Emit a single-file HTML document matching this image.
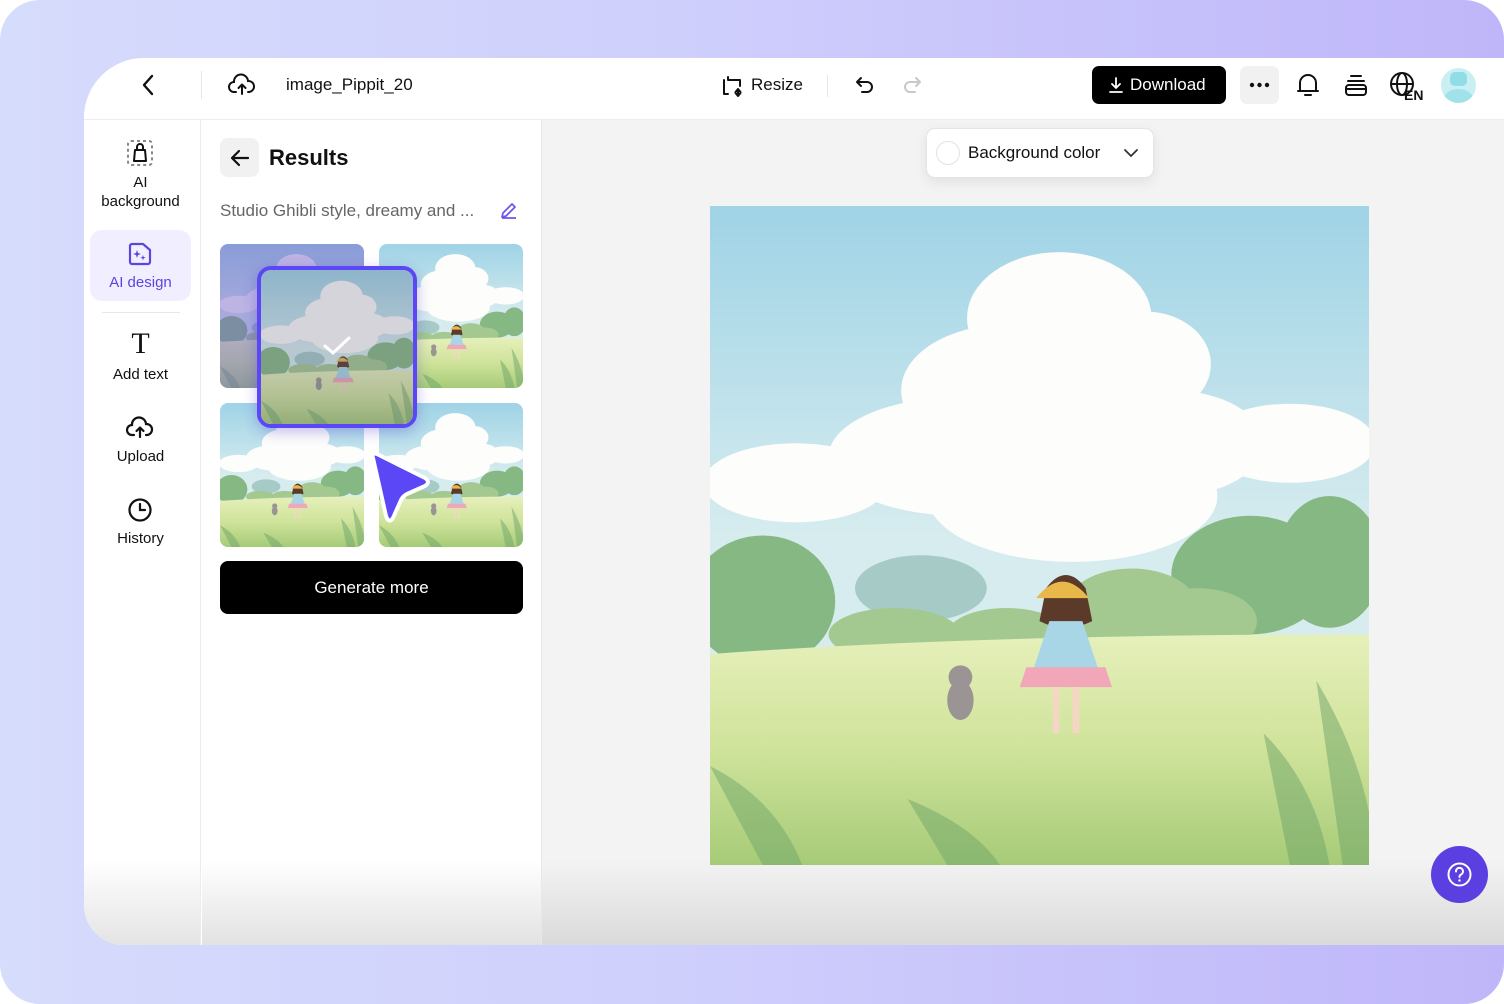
<!DOCTYPE html>
<html><head><meta charset="utf-8">
<style>
*{box-sizing:border-box;margin:0;padding:0}
body{width:1504px;height:1004px;overflow:hidden;background:#fff;font-family:"Liberation Sans",sans-serif;color:#111;position:relative}
.outer{position:absolute;left:0;top:0;width:1504px;height:1004px;border-radius:40px;background:linear-gradient(90deg,#d6dcfc 0%,#cfcffc 45%,#bfb6f9 100%)}
.win{position:absolute;left:84px;top:58px;width:1420px;height:887px;background:#fff;border-radius:60px 0 0 40px;overflow:hidden}
.top{position:absolute;left:0;top:0;width:1420px;height:62px;border-bottom:1px solid #ececec;background:#fff}
.side{position:absolute;left:0;top:62px;width:117px;height:825px;border-right:1px solid #ececec;background:linear-gradient(#fff 0,#fff 740px,#e4e4e4 825px)}
.panel{position:absolute;left:118px;top:62px;width:340px;height:825px;background:linear-gradient(#fff 0,#fff 740px,#e2e2e2 825px);border-right:1px solid #e8e8e8}
.canvas{position:absolute;left:458px;top:62px;width:962px;height:825px;background:linear-gradient(#f3f3f3 0,#f3f3f3 740px,#dadada 825px)}
.ab{position:absolute;font-size:15px;text-align:center;width:113px;left:0;line-height:19px}
svg{display:block}
.thumb{position:absolute;width:144px;height:144px;border-radius:8px;overflow:hidden}
</style></head><body>
<svg width="0" height="0" style="position:absolute">
<defs>
<linearGradient id="sky" x1="0" y1="0" x2="0" y2="1"><stop offset="0" stop-color="#9fd3e6"/><stop offset="0.5" stop-color="#d6ecef"/></linearGradient>
<linearGradient id="mead" x1="0" y1="0" x2="0" y2="1"><stop offset="0" stop-color="#e6f0bb"/><stop offset="0.5" stop-color="#cfe39a"/><stop offset="1" stop-color="#a6cb78"/></linearGradient>
<symbol id="scene" viewBox="0 0 100 100" preserveAspectRatio="none">
<rect width="100" height="100" fill="url(#sky)"/>
<g fill="#fdfdfb">
<ellipse cx="53" cy="17" rx="14" ry="10"/><ellipse cx="45" cy="28" rx="16" ry="10"/><ellipse cx="66" cy="24" rx="10" ry="8"/>
<ellipse cx="38" cy="38" rx="20" ry="9"/><ellipse cx="70" cy="36" rx="14" ry="8"/><ellipse cx="88" cy="36" rx="13" ry="6"/>
<ellipse cx="13" cy="42" rx="14" ry="6"/><ellipse cx="55" cy="44" rx="22" ry="10"/>
</g>
<ellipse cx="32" cy="58" rx="10" ry="5" fill="#a6cac6"/>
<g fill="#86b884"><ellipse cx="8" cy="60" rx="11" ry="10"/><ellipse cx="82" cy="56" rx="12" ry="9"/><ellipse cx="94" cy="54" rx="8" ry="10"/></g>
<g fill="#a3c990"><ellipse cx="28" cy="65" rx="10" ry="4"/><ellipse cx="64" cy="61" rx="10" ry="6"/><ellipse cx="45" cy="65" rx="9" ry="4"/><ellipse cx="74" cy="63" rx="9" ry="5"/></g>
<path d="M0 68 Q40 65 100 65 L100 100 L0 100Z" fill="url(#mead)"/>
<g fill="#6fa56a" opacity="0.5"><path d="M0 85 Q10 90 14 100 L8 100Z"/><path d="M84 80 Q92 88 94 100 L88 100Z"/><path d="M92 72 Q98 82 100 92 L100 100 L96 100Z"/><path d="M30 90 Q40 94 44 100 L36 100Z"/></g>
<path d="M51 58 q3 -4 6 0 l1 5 q-4 2 -8 0Z" fill="#5b3a2a"/>
<path d="M49.5 59.5 q4 -5 8 0Z" fill="#e8b84a"/>
<path d="M51.5 63 h5 l3 9 h-11Z" fill="#a9d6e6"/>
<path d="M48 70 h12 l1 3 h-14Z" fill="#f2a7b8"/>
<rect x="52" y="73" width="1" height="7" fill="#f5d6c4"/><rect x="55" y="73" width="1" height="7" fill="#f5d6c4"/>
<ellipse cx="38" cy="75" rx="2" ry="3" fill="#9a9494"/><circle cx="38" cy="71.5" r="1.8" fill="#9a9494"/>
</symbol>
</defs></svg>
<div class="outer"></div>
<div class="win">
 <div class="top">
  <svg style="position:absolute;left:56px;top:15px" width="16" height="24" viewBox="0 0 16 24"><path d="M12 3 L4 12 L12 21" fill="none" stroke="#111" stroke-width="2.4" stroke-linecap="round" stroke-linejoin="round"/></svg>
  <div style="position:absolute;left:117px;top:13px;width:1px;height:28px;background:#e6e6e6"></div>
  <svg style="position:absolute;left:144px;top:14px" width="28" height="26" viewBox="0 0 28 26"><path d="M8 20 H6 a5 5 0 0 1 0-10 a7 7 0 0 1 14-1 a5.5 5.5 0 0 1 1 11 h-1" fill="none" stroke="#111" stroke-width="2" stroke-linecap="round"/><path d="M14 22 V13 M10.5 16 L14 12.5 L17.5 16" fill="none" stroke="#111" stroke-width="2" stroke-linecap="round" stroke-linejoin="round"/></svg>
  <div style="position:absolute;left:202px;top:17px;font-size:17px;width:128px;overflow:hidden;white-space:nowrap">image_Pippit_20</div>
  <svg style="position:absolute;left:636px;top:16px" width="24" height="24" viewBox="0 0 24 24"><path d="M4 6 V20 H8 M8 3 V6 H20 V12 M18 15 V22 M15.5 18 L18 15 L20.5 18 M15.5 19 L18 22 L20.5 19" fill="none" stroke="#111" stroke-width="2" stroke-linecap="round" stroke-linejoin="round"/></svg>
  <div style="position:absolute;left:667px;top:17px;font-size:17px">Resize</div>
  <div style="position:absolute;left:743px;top:17px;width:1px;height:22px;background:#e6e6e6"></div>
  <svg style="position:absolute;left:769px;top:16px" width="24" height="24" viewBox="0 0 24 24"><path d="M8 4 L4 8 L8 12 M4 8 H14 a5 5 0 0 1 0 10 H9" fill="none" stroke="#111" stroke-width="2" stroke-linecap="round" stroke-linejoin="round"/></svg>
  <svg style="position:absolute;left:816px;top:16px" width="24" height="24" viewBox="0 0 24 24"><path d="M16 4 L20 8 L16 12 M20 8 H10 a5 5 0 0 0 0 10 H15" fill="none" stroke="#c8c8c8" stroke-width="2" stroke-linecap="round" stroke-linejoin="round"/></svg>
  <div style="position:absolute;left:1008px;top:8px;width:134px;height:38px;background:#000;border-radius:7px;color:#fff;font-size:17px;line-height:38px;padding-left:38px">Download</div>
  <svg style="position:absolute;left:1023px;top:18px" width="18" height="18" viewBox="0 0 18 18"><path d="M9 2 V12 M5 8 L9 12 L13 8 M3 16 H15" fill="none" stroke="#fff" stroke-width="1.8" stroke-linecap="round" stroke-linejoin="round"/></svg>
  <div style="position:absolute;left:1156px;top:8px;width:39px;height:38px;background:#f1f1f1;border-radius:7px"><svg width="39" height="38" viewBox="0 0 39 38"><circle cx="12" cy="19" r="2.2" fill="#111"/><circle cx="19.5" cy="19" r="2.2" fill="#111"/><circle cx="27" cy="19" r="2.2" fill="#111"/></svg></div>
  <svg style="position:absolute;left:1211px;top:13px" width="26" height="28" viewBox="0 0 26 28"><path d="M5 20 V12 a8 8 0 0 1 16 0 V20 H3 H23" fill="none" stroke="#111" stroke-width="2" stroke-linecap="round" stroke-linejoin="round"/><path d="M10 24 H16" stroke="#111" stroke-width="2" stroke-linecap="round"/></svg>
  <svg style="position:absolute;left:1259px;top:15px" width="26" height="26" viewBox="0 0 26 26"><path d="M8 3 H18 M5 8 H21" stroke="#111" stroke-width="2" stroke-linecap="round"/><rect x="3" y="12" width="20" height="10" rx="3" fill="none" stroke="#111" stroke-width="2"/><path d="M3 16 H23" stroke="#111" stroke-width="2"/></svg>
  <svg style="position:absolute;left:1305px;top:12px" width="40" height="32" viewBox="0 0 40 32"><circle cx="13" cy="14" r="11" fill="none" stroke="#111" stroke-width="2"/><ellipse cx="13" cy="14" rx="5" ry="11" fill="none" stroke="#111" stroke-width="2"/><path d="M2 14 H24" stroke="#111" stroke-width="2"/><text x="15" y="30" font-family="Liberation Sans" font-weight="bold" font-size="14" fill="#111">EN</text></svg>
  <div style="position:absolute;left:1357px;top:10px;width:35px;height:35px;border-radius:50%;background:#c9eff3;overflow:hidden"><div style="position:absolute;left:9px;top:4px;width:17px;height:14px;border-radius:5px;background:#90dde6"></div><div style="position:absolute;left:3px;top:21px;width:29px;height:20px;border-radius:50%;background:#9fe2ea"></div></div>
 </div>
 <div class="side">
  <svg style="position:absolute;left:42px;top:19px" width="28" height="28" viewBox="0 0 28 28"><rect x="2" y="2" width="24" height="24" rx="3" fill="none" stroke="#888" stroke-width="2" stroke-dasharray="3 3"/><path d="M8 22 L9 11 H19 L20 22Z M11 11 V8 a3 3 0 0 1 6 0 V11" fill="none" stroke="#111" stroke-width="2" stroke-linejoin="round"/></svg>
  <div class="ab" style="top:53px">AI<br>background</div>
  <div style="position:absolute;left:6px;top:110px;width:101px;height:71px;border-radius:12px;background:#f1efff"></div>
  <svg style="position:absolute;left:43px;top:122px" width="26" height="24" viewBox="0 0 26 24"><path d="M3 4 a2 2 0 0 1 2-2 H16 L23 8 V20 a2 2 0 0 1 -2 2 H5 a2 2 0 0 1 -2-2Z" fill="none" stroke="#5a45e0" stroke-width="2.2" stroke-linejoin="round"/><path d="M10 8 l1 3 l3 1 l-3 1 l-1 3 l-1-3 l-3-1 l3-1Z M16 13 l.7 2 l2 .7 l-2 .7 l-.7 2 l-.7-2 l-2-.7 l2-.7Z" fill="#5a45e0"/></svg>
  <div class="ab" style="top:153px;color:#5a45e0">AI design</div>
  <div style="position:absolute;left:18px;top:192px;width:78px;height:1px;background:#e8e8e8"></div>
  <div style="position:absolute;left:0;width:113px;top:209px;text-align:center;font-family:'Liberation Serif',serif;font-size:30px;line-height:30px">T</div>
  <div class="ab" style="top:245px">Add text</div>
  <svg style="position:absolute;left:42px;top:295px" width="28" height="26" viewBox="0 0 28 26"><path d="M8 20 H6 a5 5 0 0 1 0-10 a7 7 0 0 1 14-1 a5.5 5.5 0 0 1 1 11 h-1" fill="none" stroke="#111" stroke-width="2.2" stroke-linecap="round"/><path d="M14 22 V13 M10.5 16 L14 12.5 L17.5 16" fill="none" stroke="#111" stroke-width="2.2" stroke-linecap="round" stroke-linejoin="round"/></svg>
  <div class="ab" style="top:327px">Upload</div>
  <svg style="position:absolute;left:43px;top:377px" width="26" height="26" viewBox="0 0 26 26"><circle cx="13" cy="13" r="10.5" fill="none" stroke="#111" stroke-width="2.2"/><path d="M13 7 V13 H18" fill="none" stroke="#111" stroke-width="2.2" stroke-linecap="round"/></svg>
  <div class="ab" style="top:409px">History</div>
 </div>
 <div class="panel">
  <div style="position:absolute;left:18px;top:18px;width:39px;height:39px;background:#f1f1f1;border-radius:8px"></div>
  <svg style="position:absolute;left:27px;top:27px" width="22" height="22" viewBox="0 0 22 22"><path d="M19 11 H3 M10 4 L3 11 L10 18" fill="none" stroke="#111" stroke-width="2.2" stroke-linecap="round" stroke-linejoin="round"/></svg>
  <div style="position:absolute;left:67px;top:25px;font-size:22px;font-weight:bold">Results</div>
  <div style="position:absolute;left:18px;top:81px;font-size:17px;color:#666">Studio Ghibli style, dreamy and ...</div>
  <svg style="position:absolute;left:297px;top:80px" width="20" height="20" viewBox="0 0 20 20"><path d="M3 17 L4 13 L13 4 L16 7 L7 16Z M3 18 H17" fill="none" stroke="#6a55ee" stroke-width="1.7" stroke-linejoin="round"/></svg>
  <div class="thumb" style="left:18px;top:124px"><svg width="144" height="144"><use href="#scene"/></svg><div style="position:absolute;inset:0;background:rgba(110,90,200,.45)"></div></div>
  <div class="thumb" style="left:177px;top:124px"><svg width="144" height="144"><use href="#scene"/></svg></div>
  <div class="thumb" style="left:18px;top:283px"><svg width="144" height="144"><use href="#scene"/></svg></div>
  <div class="thumb" style="left:177px;top:283px"><svg width="144" height="144"><use href="#scene"/></svg></div>
  <div style="position:absolute;left:55px;top:146px;width:160px;height:162px;border:4px solid #5b47f5;border-radius:14px;overflow:hidden;box-shadow:0 4px 14px rgba(60,40,200,.3)"><svg width="152" height="154"><use href="#scene"/></svg><div style="position:absolute;inset:0;background:rgba(90,90,120,.25)"></div>
   <svg style="position:absolute;left:60px;top:64px" width="32" height="24" viewBox="0 0 32 24"><path d="M4 12 L12 19 L28 4" fill="none" stroke="#fff" stroke-width="3" stroke-linecap="round"/></svg></div>
  <svg style="position:absolute;left:165px;top:330px" width="70" height="75" viewBox="0 0 70 75"><path d="M6 8 Q4 2 10 4 L58 28 Q64 32 58 36 L40 44 Q36 46 34 50 L26 68 Q22 74 19 66Z" fill="#5b47f5" stroke="#fff" stroke-width="4" stroke-linejoin="round"/></svg>
  <div style="position:absolute;left:18px;top:441px;width:303px;height:53px;background:#000;border-radius:8px;color:#fff;font-size:17px;text-align:center;line-height:53px">Generate more</div>
 </div>
 <div class="canvas">
  <div style="position:absolute;left:384px;top:8px;width:228px;height:50px;background:#fff;border:1px solid #e4e4e4;border-radius:9px;box-shadow:0 4px 12px rgba(0,0,0,.08)">
   <div style="position:absolute;left:9px;top:12px;width:24px;height:24px;border-radius:50%;border:1px solid #e2e2e2"></div>
   <div style="position:absolute;left:41px;top:14px;font-size:17px">Background color</div>
   <svg style="position:absolute;left:196px;top:18px" width="16" height="12" viewBox="0 0 16 12"><path d="M2 3 L8 9 L14 3" fill="none" stroke="#333" stroke-width="1.8" stroke-linecap="round"/></svg>
  </div>
  <svg style="position:absolute;left:168px;top:86px" width="659" height="659"><use href="#scene"/></svg>
  <div style="position:absolute;left:889px;top:726px;width:57px;height:57px;border-radius:50%;background:#5b3fe0"></div>
  <svg style="position:absolute;left:904px;top:741px" width="27" height="27" viewBox="0 0 27 27"><circle cx="13.5" cy="13.5" r="11" fill="none" stroke="#fff" stroke-width="2"/><path d="M10 10.5 a3.5 3.5 0 1 1 5 3 q-1.5 .8 -1.5 2.5" fill="none" stroke="#fff" stroke-width="2" stroke-linecap="round"/><circle cx="13.5" cy="19.5" r="1.2" fill="#fff"/></svg>
 </div>
</div>
</body></html>
